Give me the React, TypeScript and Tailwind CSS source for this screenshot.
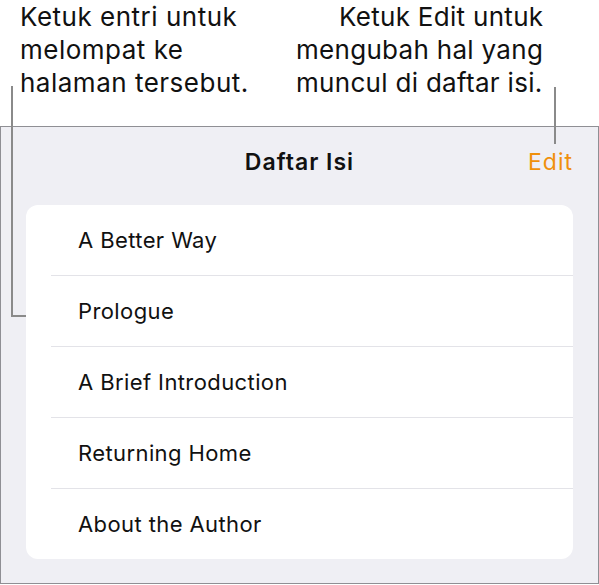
import React from "react";

const items = [
  "A Better Way",
  "Prologue",
  "A Brief Introduction",
  "Returning Home",
  "About the Author",
];

export default function App() {
  return (
    <div
      className="relative w-[599px] h-[585px] bg-white overflow-hidden"
      style={{ fontFamily: "Inter, 'Noto Sans', sans-serif" }}
    >
      <div className="h-[126px] flex text-[26px] leading-[33px] tracking-[0.5px] text-[#111]">
        <div className="pl-[20px] w-[296px]">
          <div>Ketuk entri untuk</div>
          <div>melompat ke</div>
          <div>halaman tersebut.</div>
        </div>
        <div className="tracking-[0.3px]">
          <div className="ml-[43px]">Ketuk Edit untuk</div>
          <div>mengubah hal yang</div>
          <div>muncul di daftar isi.</div>
        </div>
      </div>
      <div className="h-[458px] border border-[#8f8f94] bg-[#efeff4] px-[25px]">
        <div className="relative h-[78px] flex items-center justify-center">
          <span className="text-[23px] font-semibold tracking-[1px] text-[#111] mt-[-8px]">Daftar Isi</span>
          <span className="absolute right-0 top-[18px] text-[23px] tracking-[1px] text-[#f0900c]">Edit</span>
        </div>
        <div className="bg-white rounded-[12px] overflow-hidden">
          {items.map((t, i) => (
            <div key={t}>
              {i > 0 && <div className="ml-[25px] h-px bg-[#e3e3e8]" />}
              <div className="h-[70px] flex items-center pl-[52px] text-[22px] tracking-[0.4px] text-[#111]">
                {t}
              </div>
            </div>
          ))}
        </div>
      </div>
      {/* callout lines */}
      <div className="absolute left-[11px] top-[86px] w-[2px] h-[231px] bg-[#8a8a8a]" />
      <div className="absolute left-[11px] top-[315px] w-[15px] h-[2px] bg-[#8a8a8a]" />
      <div className="absolute left-[554px] top-[87px] w-[2px] h-[57px] bg-[#8a8a8a]" />
    </div>
  );
}
